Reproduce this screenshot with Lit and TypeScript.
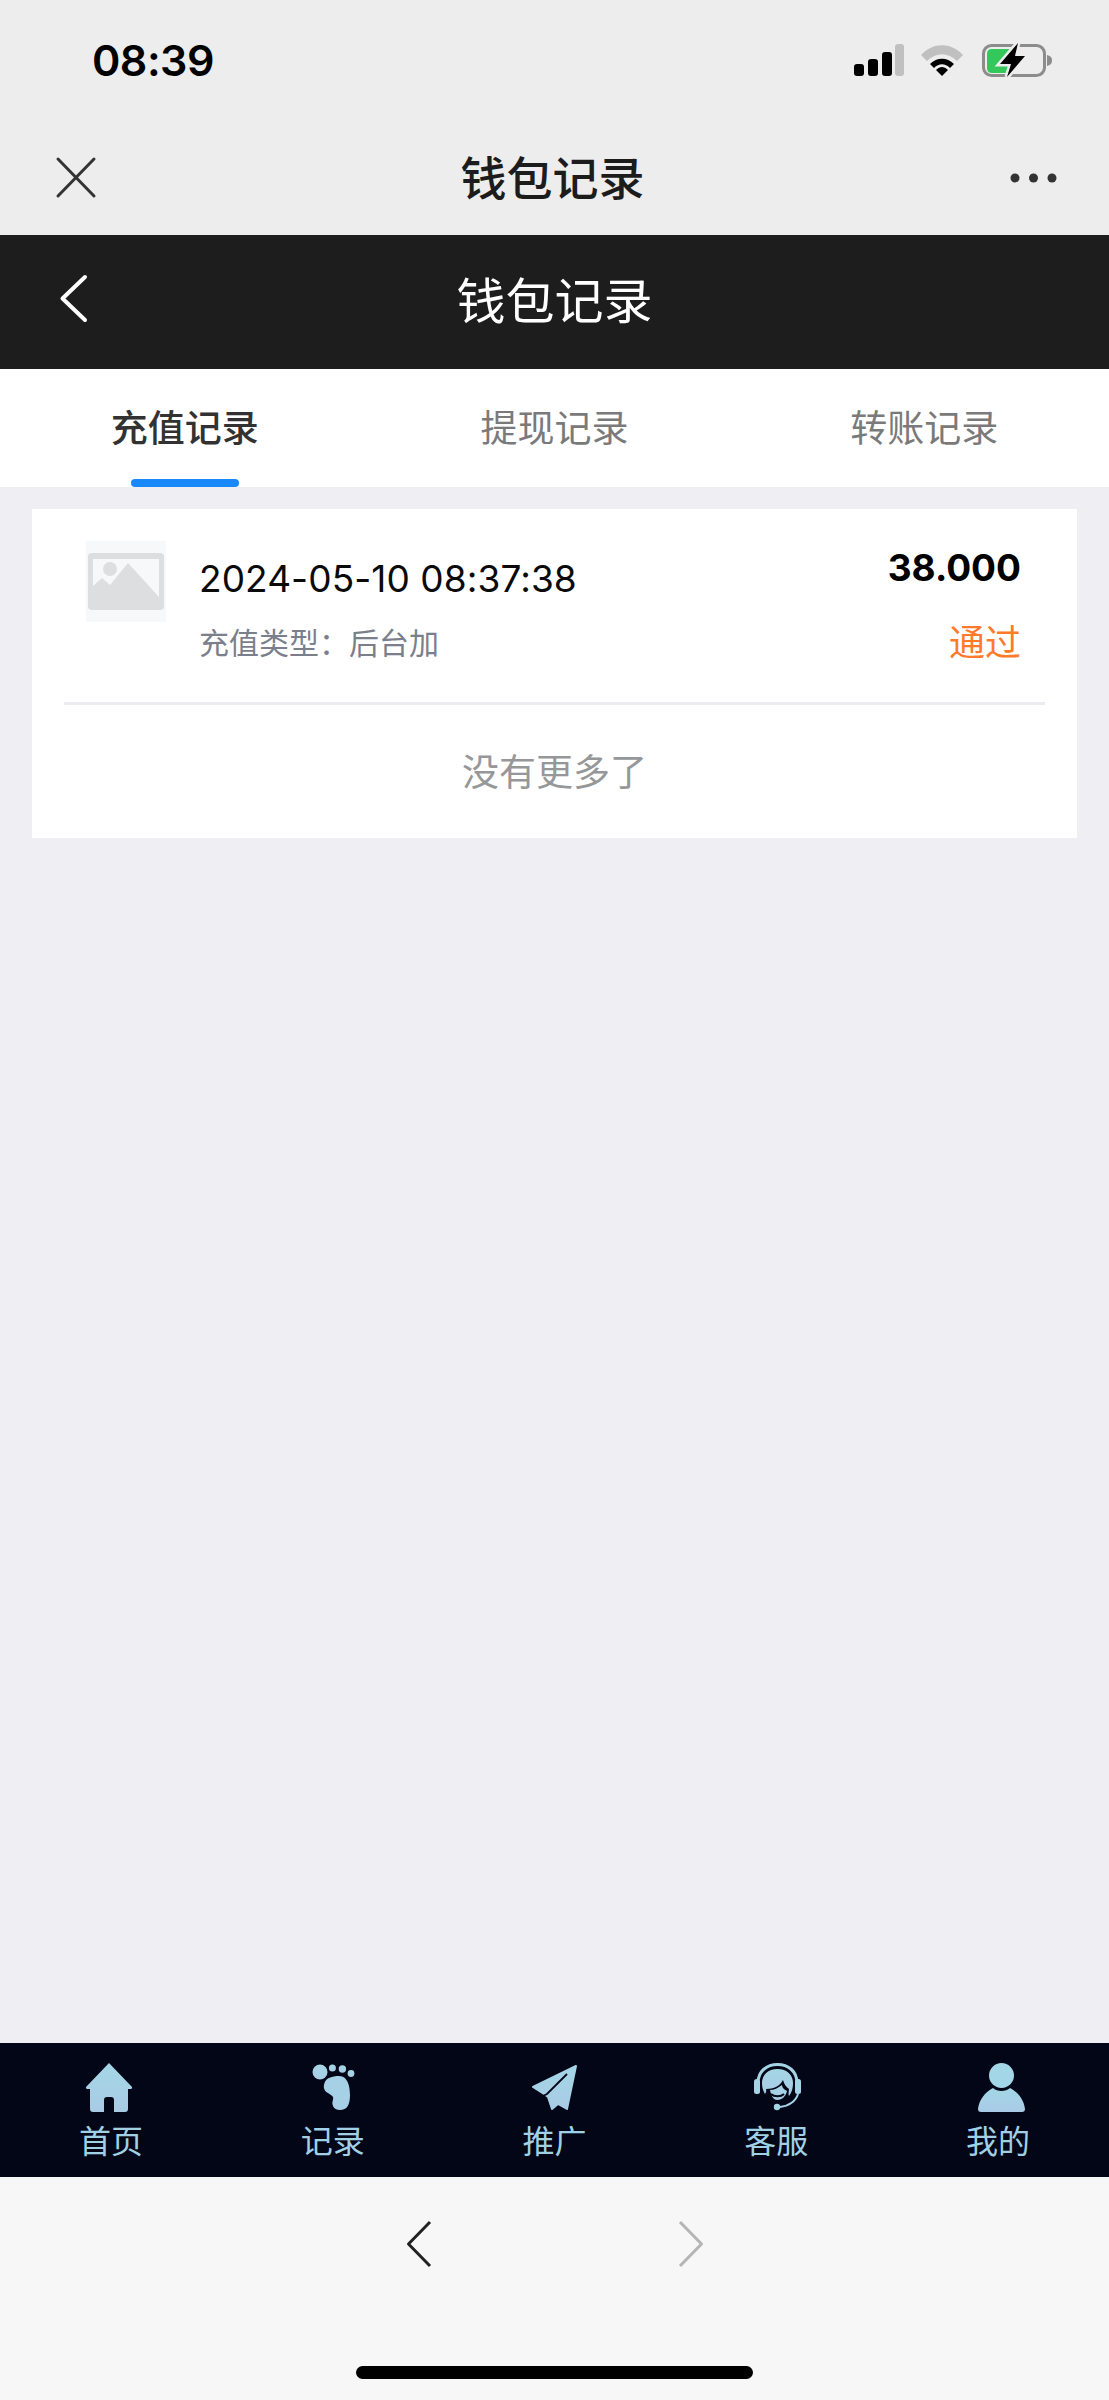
import { LitElement, html, css, svg } from "lit";
import { customElement } from "lit/decorators.js";

const grad = svg`<defs><linearGradient id="g" x1="0" y1="0" x2="0" y2="1"><stop offset="0" stop-color="#a3d6e6"/><stop offset="1" stop-color="#a9cbe5"/></linearGradient></defs>`;

const house = svg`${grad}<path fill="url(#g)" d="M23 0L46 24Q46.5 26 44 26L42 26L42 46Q42 49 39 49L28 49L28 37Q28 34 25 34L21 34Q18 34 18 37L18 49L7 49Q4 49 4 46L4 26L2 26Q-.5 26 0 24Z"/>`;
const foot = svg`${grad}<g fill="url(#g)"><circle cx="8" cy="9" r="7.5"/><circle cx="20.4" cy="5" r="3.5"/><circle cx="30.4" cy="6" r="3.7"/><circle cx="39" cy="10.5" r="3.4"/></g><path fill="#a6d0e6" d="M27 13C36 13 38 24 38 32C38 42 35 47 28 47C22 47 19 42 21 37C22 33 20 33 16 30C12 28 11 24 12.5 20C14 15 20 13 27 13Z"/>`;
const plane = svg`${grad}<path fill="url(#g)" stroke="url(#g)" stroke-width="2" stroke-linejoin="round" d="M46 3L3 24L14 31L18 34L22 46L28 41L37 46Z"/><path fill="none" stroke="#030616" stroke-width="1.800" d="M37 11L17 31L13 33"/>`;
const headset = svg`${grad}<path fill="none" stroke="#a5d3e6" stroke-width="3" d="M4 20C4 8 13 1.500 23.500 1.500C34 1.500 43 8 43 20"/><rect x="0" y="16" width="6" height="15" rx="2.500" fill="#a5d3e6"/><rect x="41" y="16" width="6" height="15" rx="2.500" fill="#a5d3e6"/><path fill="url(#g)" d="M23.500 6C33 6 39 12 39 20C39 25 38 29 35 33L32 27L13 27L11 31C9 28 8 24 8 20C8 12 14 6 23.500 6Z"/><path fill="#030616" d="M12 26C20 26 26 23 29 17C30 21 32 24 35 26L34 36L14 36Z"/><path fill="url(#g)" d="M16 27C20 27 24 25 28 22C28 25 31 27 33 28C32 33 28 37 23.500 37C19 37 17 32 16 27Z"/><path fill="none" stroke="#030616" stroke-width="2" d="M17 31C20 34 27 34 30 31"/><path fill="none" stroke="#a5d3e6" stroke-width="2" d="M44 31C42 38 35 43 26 44"/><circle cx="23" cy="44" r="3.200" fill="#a5d3e6"/>`;
const person = svg`${grad}<circle cx="23.500" cy="12.500" r="12.500" fill="#a3d6e6"/><path fill="url(#g)" d="M15 25C19 29 28 29 32 25C40 29 46 37 47 46Q47 49 44 49L3 49Q0 49 0 46C1 37 7 29 15 25Z"/>`;

const tabs: [string, any, number, number, number][] = [
  ["首页", house, 46, 49, 2],
  ["记录", foot, 42, 49, 0],
  ["推广", plane, 48, 49, 0],
  ["客服", headset, 47, 49, -1],
  ["我的", person, 47, 49, -3],
];

@customElement("app-root")
export class AppRoot extends LitElement {
  static styles = css`
    :host {
      display: flex;
      flex-direction: column;
      width: 1109px;
      height: 2400px;
      background: #eeeef3;
      font-family: Inter, "Noto Sans CJK SC", sans-serif;
      overflow: hidden;
    }
    svg { display: block; flex: none; overflow: visible; }
    .chrome { background: #ededed; height: 235px; flex: none; display: flex; flex-direction: column; }
    .status { height: 120px; flex: none; display: flex; align-items: center; justify-content: space-between; padding: 0 57px 0 92px; box-sizing: border-box; }
    .time { font-size: 43px; letter-spacing: -0.5px; font-weight: 600; color: #000; line-height: 50px; }
    .nav { height: 115px; flex: none; display: flex; align-items: center; justify-content: space-between; padding: 0 52px 0 57px; box-sizing: border-box; }
    .nav-title { font-size: 46px; font-weight: 500; color: #1c1c1c; line-height: 60px; }
    .head { background: #1d1d1d; height: 134px; flex: none; position: relative; display: flex; align-items: center; justify-content: center; }
    .head-title { font-size: 49px; color: #fff; line-height: 60px; }
    .head-back { position: absolute; left: 60px; top: 40px; }
    .tabs { background: #fff; height: 118px; flex: none; display: flex; }
    .tab { flex: 1; position: relative; display: flex; align-items: center; justify-content: center; font-size: 37px; line-height: 50px; color: #7a7a7a; padding-top: 2px; box-sizing: border-box; }
    .tab.on { color: #323233; font-weight: 500; font-size: 37px; }
    .tab.on::after { content: ""; position: absolute; left: 50%; bottom: 0; width: 108px; height: 8px; margin-left: -54px; border-radius: 4px; background: #1989fa; }
    main { flex: 1; min-height: 0; padding: 22px 32px 0; }
    .card { background: #fff; height: 329px; display: flex; flex-direction: column; }
    .row { display: flex; align-items: flex-start; padding: 32px 56px 39px 54px; }
    .thumb { width: 80px; height: 81px; background: #f7f8fa; flex: none; display: flex; align-items: center; justify-content: center; }
    .mid { flex: 1; margin-left: 33px; margin-top: 13px; }
    .date { font-size: 37px; letter-spacing: 0.08px; line-height: 50px; color: #0a0a0a; }
    .type { font-size: 30px; line-height: 40px; color: #7b7f8c; margin-top: 19px; }
    .right { display: flex; flex-direction: column; align-items: flex-end; margin-top: 2px; }
    .amt { font-size: 37px; line-height: 50px; font-weight: 700; color: #000; }
    .state { font-size: 36px; line-height: 40px; color: #ff7a2a; margin-top: 30px; }
    .rule { height: 3px; margin: 0 32px; background: #ebecf0; flex: none; }
    .more { flex: 1; display: flex; align-items: center; justify-content: center; font-size: 37px; color: #969799; padding-bottom: 4px; box-sizing: border-box; }
    .bar { height: 134px; flex: none; background: #030616; display: flex; }
    .bar-item { flex: 1; display: flex; flex-direction: column; align-items: center; padding-top: 20px; box-sizing: border-box; }
    .bar-label { font-size: 32px; line-height: 36px; margin-top: 12px; color: #a0d0e4; }
    .browser { height: 223px; flex: none; background: #f7f7f7; display: flex; flex-direction: column; align-items: center; padding-top: 44px; box-sizing: border-box; }
    .arrows { display: flex; gap: 248px; }
    .home { width: 397px; height: 13px; border-radius: 7px; background: #000; margin-top: 99px; }
  `;

  render() {
    return html`
      <div class="chrome">
        <div class="status">
          <span class="time">08:39</span>
          <svg width="198" height="36" viewBox="854 42 198 36">
            <g fill="#000">
              <rect x="854" y="64" width="10" height="12" rx="3"/>
              <rect x="868" y="59" width="10" height="17" rx="3"/>
              <rect x="882" y="52" width="10" height="24" rx="3"/>
            </g>
            <rect x="895" y="44" width="9" height="32" rx="3" fill="#c0c0c0"/>
            <path d="M921 55C933 42 951 42 963 55L957 61C948 52 936 52 927 61Z" fill="#c0c0c0"/>
            <path d="M930 64C937 57 947 57 954 64L950 68C945 63 939 63 934 68Z" fill="#000"/>
            <path d="M936 70C940 66 944 66 948 70L942 76Z" fill="#000"/>
            <rect x="983.500" y="45.500" width="61" height="30" rx="8" fill="none" stroke="#8c8c8c" stroke-width="3"/>
            <path d="M1047 55C1051 56 1052 58 1052 60C1052 63 1051 65 1047 66Z" fill="#8c8c8c"/>
            <path d="M992 49H1010V73H992Q987 73 987 68V54Q987 49 992 49Z" fill="#34c759"/>
            <path d="M1018 43L1000 64L1011 64L1007 77L1025 56L1015 56Z" fill="#000" stroke="#ededed" stroke-width="5" paint-order="stroke"/>
          </svg>
        </div>
        <div class="nav">
          <svg width="38" height="39" viewBox="0 0 38 39"><path d="M1 1L37 38M37 1L1 38" stroke="#333" stroke-width="3" stroke-linecap="round" fill="none"/></svg>
          <span class="nav-title">钱包记录</span>
          <svg width="47" height="10" viewBox="0 0 47 10"><g fill="#333"><circle cx="5" cy="5" r="4.500"/><circle cx="23.500" cy="5" r="4.500"/><circle cx="42" cy="5" r="4.500"/></g></svg>
        </div>
      </div>
      <div class="head">
        <svg class="head-back" width="27" height="47" viewBox="0 0 27 47"><path d="M25 2L2.500 23.500L25 45" stroke="#fff" stroke-width="4" stroke-linecap="round" stroke-linejoin="round" fill="none"/></svg>
        <span class="head-title">钱包记录</span>
      </div>
      <div class="tabs">
        <div class="tab on">充值记录</div>
        <div class="tab">提现记录</div>
        <div class="tab">转账记录</div>
      </div>
      <main>
        <div class="card">
          <div class="row">
            <div class="thumb">
              <svg width="76" height="57" viewBox="0 0 76 57">
                <rect width="76" height="57" rx="4" fill="#dcdee0"/>
                <rect x="5" y="6" width="66" height="38" fill="#f7f8fa"/>
                <path d="M5 33L14 25L22 32L40 10L71 44V48H5Z" fill="#dcdee0"/>
                <circle cx="22" cy="16" r="7" fill="#dcdee0"/>
              </svg>
            </div>
            <div class="mid">
              <div class="date">2024-05-10 08:37:38</div>
              <div class="type">充值类型：后台加</div>
            </div>
            <div class="right">
              <div class="amt">38.000</div>
              <div class="state">通过</div>
            </div>
          </div>
          <div class="rule"></div>
          <div class="more">没有更多了</div>
        </div>
      </main>
      <div class="bar">
        ${tabs.map(
          ([label, icon, w, h, dx]) => html`
            <div class="bar-item">
              <svg width=${w} height=${h} viewBox="${dx} 0 ${w} ${h}">${icon}</svg>
              <span class="bar-label">${label}</span>
            </div>
          `
        )}
      </div>
      <div class="browser">
        <div class="arrows">
          <svg width="24" height="46" viewBox="0 0 24 46"><path d="M23 1L1.500 23L23 45" stroke="#222" stroke-width="3" fill="none" stroke-linejoin="round"/></svg>
          <svg width="24" height="46" viewBox="0 0 24 46"><path d="M1 1L22.500 23L1 45" stroke="#b5b5b5" stroke-width="3" fill="none" stroke-linejoin="round"/></svg>
        </div>
        <div class="home"></div>
      </div>
    `;
  }
}
